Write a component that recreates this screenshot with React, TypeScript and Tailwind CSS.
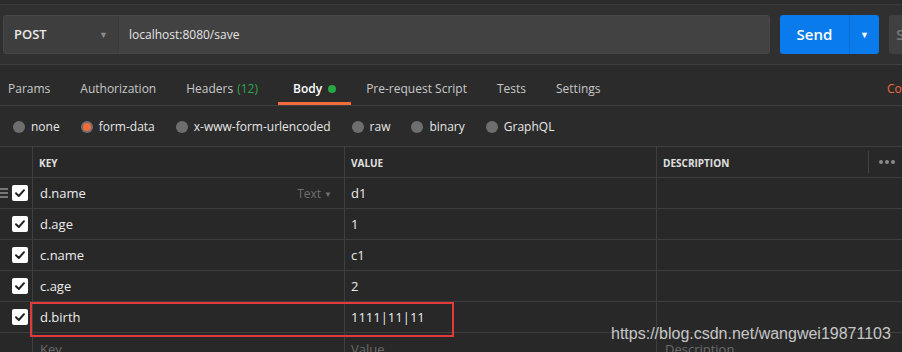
import React from 'react';

const tabs = [
  { label: 'Params' },
  { label: 'Authorization' },
  { label: 'Headers', extra: '(12)' },
  { label: 'Body', active: true },
  { label: 'Pre-request Script' },
  { label: 'Tests' },
  { label: 'Settings' },
];

const bodyTypes = ['none', 'form-data', 'x-www-form-urlencoded', 'raw', 'binary', 'GraphQL'];

const rows = [
  { key: 'd.name', value: 'd1' },
  { key: 'd.age', value: '1' },
  { key: 'c.name', value: 'c1' },
  { key: 'c.age', value: '2' },
  { key: 'd.birth', value: '1111|11|11' },
];

const Check = () => (
  <div className="w-4 h-4 bg-white rounded-[2px] flex items-center justify-center">
    <svg width="12" height="12" viewBox="0 0 12 12">
      <path d="M2 6.2 L4.8 9 L10 3.2" fill="none" stroke="#222" strokeWidth="2" strokeLinecap="round" strokeLinejoin="round" />
    </svg>
  </div>
);

const App: React.FC = () => {
  return (
    <div
      className="w-[902px] h-[352px] overflow-hidden bg-[#282828] text-[12px] text-[#f0f0f0] relative"
      style={{ fontFamily: '"Open Sans", "Noto Sans", sans-serif' }}
    >
      {/* URL bar */}
      <div className="h-[5px] bg-[#2c2c2c] border-b border-[#3c3c3c]" />
      <div className="h-[60px] bg-[#303030] border-b border-[#3e3e3e] flex items-start pt-[10px] pl-[3px] gap-[10px]">
        <div className="flex shrink-0 h-[39px] w-[767px] rounded-[3px] border border-[#474747] bg-[#424242]">
          <div className="w-[115px] flex items-center justify-between pl-[10px] pr-[10px] border-r border-[#3a3a3a] bg-[#3e3e3e] rounded-l-[3px]">
            <span className="font-semibold text-[13px] text-[#e8e8e8]">POST</span>
            <span className="text-[#8a8a8a] text-[9px]">▼</span>
          </div>
          <div className="flex items-center pl-[10px] text-[#e4e4e4]">localhost:8080/save</div>
        </div>
        <div className="flex shrink-0 h-[39px] w-[99px] rounded-[3px] bg-[#097bed] overflow-hidden">
          <div className="w-[69px] flex items-center justify-center text-[15px] font-semibold text-white">Send</div>
          <div className="flex-1 border-l border-[#0a6fd4] flex items-center justify-center text-white text-[9px]">▼</div>
        </div>
        <div className="h-[39px] w-[40px] shrink-0 rounded-[3px] bg-[#404040] flex items-center pl-[7px] text-[#777] font-semibold text-[15px]">S</div>
      </div>

      {/* tabs */}
      <div className="h-[41px] bg-[#2b2b2b] border-b border-[#3e3e3e] flex items-stretch relative pl-[8px]">
        {tabs.map((t, i) => (
          <div
            key={t.label}
            className={`flex items-center pt-[7px] relative ${i === 0 ? 'pr-[15px]' : 'px-[15px]'} ${
              t.active ? 'text-white font-semibold ml-[5px]' : 'text-[#c8c8c8]'
            }`}
          >
            <span>{t.label}</span>
            {t.extra && <span className="ml-[4px] text-[#2fa550]">{t.extra}</span>}
            {t.active && <span className="ml-[6px] w-[8px] h-[8px] rounded-full bg-[#28a745]" />}
            {t.active && <span className="absolute left-0 right-0 bottom-0 h-[3px] bg-[#f26b3a]" />}
          </div>
        ))}
        <div className="absolute left-[887px] top-0 bottom-0 pt-[7px] flex items-center text-[#f26b3a] whitespace-nowrap">Co</div>
      </div>

      {/* body types */}
      <div className="h-[41px] bg-[#2b2b2b] border-b border-[#3e3e3e] flex items-center pt-[2px] pl-[13px] gap-[21px]">
        {bodyTypes.map((b) => (
          <div key={b} className="flex items-center gap-[6px]">
            {b === 'form-data' ? (
              <span className="w-[12px] h-[12px] rounded-full bg-[#6e6e6e] flex items-center justify-center">
                <span className="w-[8px] h-[8px] rounded-full bg-[#f26b3a]" />
              </span>
            ) : (
              <span className="w-[12px] h-[12px] rounded-full bg-[#6e6e6e]" />
            )}
            <span className="text-[#e6e6e6]">{b}</span>
          </div>
        ))}
      </div>

      {/* table */}
      <div className="bg-[#282828]">
        <div className="grid grid-cols-[33px_312px_312px_245px] h-[31px] border-b border-[#3e3e3e]">
          <div className="border-r border-[#3e3e3e]" />
          <div className="border-r border-[#3e3e3e] flex items-center pt-[2px] pl-[6px] text-[10px] font-bold text-[#e0e0e0]">KEY</div>
          <div className="border-r border-[#3e3e3e] flex items-center pt-[2px] pl-[6px] text-[10px] font-bold text-[#e0e0e0]">VALUE</div>
          <div className="flex items-center pl-[6px] text-[10px] font-bold text-[#e0e0e0]">
            <span className="flex-1 pt-[2px]">DESCRIPTION</span>
            <span className="w-px h-[22px] bg-[#444] mr-[10px]" />
            <span className="flex gap-[2px] mr-[7px]">
              <span className="w-[4px] h-[4px] rounded-full bg-[#8a8a8a]" />
              <span className="w-[4px] h-[4px] rounded-full bg-[#8a8a8a]" />
              <span className="w-[4px] h-[4px] rounded-full bg-[#8a8a8a]" />
            </span>
          </div>
        </div>
        {rows.map((r, i) => (
          <div key={r.key} className="grid grid-cols-[33px_312px_312px_245px] h-[31px] border-b border-[#3e3e3e] text-[#ececec]">
            <div className="border-r border-[#3e3e3e] flex items-center pl-[12px] relative">
              {i === 0 && (
                <span className="absolute left-0 top-[10px] flex flex-col gap-[2px]">
                  <span className="w-[8px] h-[2px] bg-[#777]" />
                  <span className="w-[8px] h-[2px] bg-[#777]" />
                  <span className="w-[8px] h-[2px] bg-[#777]" />
                </span>
              )}
              <Check />
            </div>
            <div className="border-r border-[#3e3e3e] flex items-center pt-[2px] pl-[7px] pr-[12px]">
              <span className="flex-1 text-[13px]">{r.key}</span>
              {i === 0 && (
                <span className="text-[#6f6f6f] flex items-center gap-[3px]">
                  Text <span className="text-[8px]">▼</span>
                </span>
              )}
            </div>
            <div className="border-r border-[#3e3e3e] flex items-center pt-[2px] pl-[6px] text-[13px]">{r.value}</div>
            <div />
          </div>
        ))}
        <div className="grid grid-cols-[33px_312px_312px_245px] h-[31px] text-[#6a6a6a]">
          <div className="border-r border-[#3e3e3e]" />
          <div className="border-r border-[#3e3e3e] flex items-center pt-[2px] pl-[7px] text-[13px]">Key</div>
          <div className="border-r border-[#3e3e3e] flex items-center pt-[2px] pl-[6px] text-[13px]">Value</div>
          <div className="flex items-center pt-[2px] pl-[8px] text-[13px]">Description</div>
        </div>
      </div>

      {/* highlight */}
      <div className="absolute left-[30px] top-[302px] w-[424px] h-[35px] border-2 border-[#e23a3a] pointer-events-none" />

      {/* watermark */}
      <div
        className="absolute left-[611px] top-[322px] text-[16px] text-[#d8d8d8] opacity-90"
        style={{ fontFamily: '"Liberation Sans", Arial, sans-serif' }}
      >
        https://blog.csdn.net/wangwei19871103
      </div>
    </div>
  );
};

export default App;
